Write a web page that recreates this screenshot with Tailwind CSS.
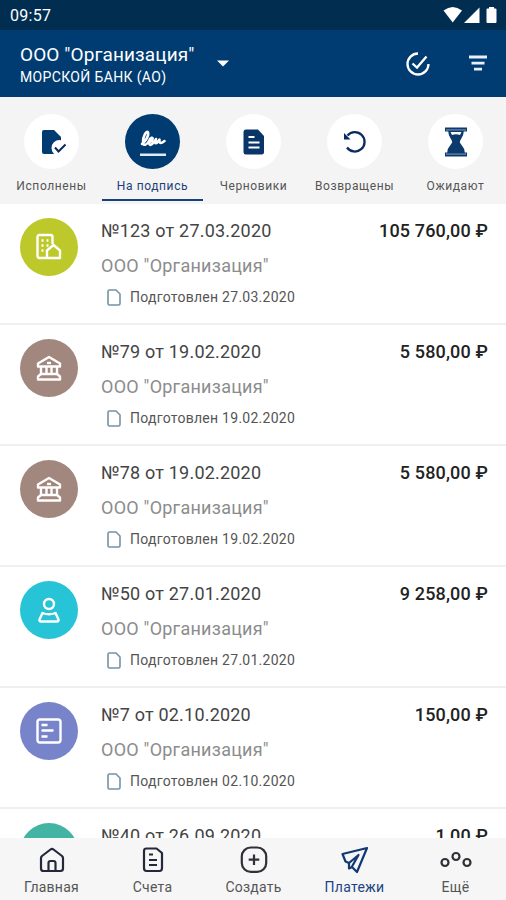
<!DOCTYPE html>
<html lang="ru">
<head>
  <meta charset="UTF-8" />
  <meta name="viewport" content="width=device-width, initial-scale=1" />
  <title>Платежи</title>
  <script src="https://cdn.jsdelivr.net/npm/@tailwindcss/browser@4"></script>
</head>
<body class="bg-white font-[Roboto,sans-serif] whitespace-nowrap">
  <div class="flex flex-col w-full h-[900px] overflow-hidden">
    <!-- Status bar -->
    <div class="h-[30px] shrink-0 bg-[#002d50] text-white flex items-center justify-between pl-2.5 pr-2">
      <span class="text-base leading-none tracking-[0.3px] pt-0.5">09:57</span>
      <svg class="w-[56px] h-[18px]" viewBox="0 0 56 18" fill="#fff">
        <path d="M1.500 4.500Q10.700 -2.500 20 4.500L10.700 16.500Z" />
        <path d="M22 17H37.500V1.500Z" />
        <path d="M47 2.500V1H52V2.500H53.500Q54.500 2.500 54.500 3.500V16Q54.500 17 53.500 17H45.500Q44.500 17 44.500 16V3.500Q44.500 2.500 45.500 2.500Z" />
      </svg>
    </div>

    <!-- Header -->
    <header class="h-[67px] shrink-0 bg-[#003c71] text-white flex items-center pl-5 pr-[19px]">
      <div class="w-[177px] pt-0.5">
        <div class="text-[19px] leading-6 tracking-[0.1px]">ООО "Организация"</div>
        <div class="text-sm leading-5 tracking-[0.35px]">МОРСКОЙ БАНК (АО)</div>
      </div>
      <svg class="w-3 h-[7px] ml-5" viewBox="0 0 12 7" fill="#fff"><path d="M0 .5H12L6 6.500Z" /></svg>
      <svg class="w-6 h-6 ml-auto" viewBox="0 0 24 24" fill="none" stroke="#fff" stroke-width="2.300">
        <path d="M12 1.500A10.500 10.500 0 1 0 22.500 12" />
        <path d="M6.500 11.500L11 15.500L20.500 4.500" />
      </svg>
      <svg class="w-[18px] h-[17px] ml-[39px]" viewBox="0 0 18 17" fill="#e8f0ff">
        <path d="M0 .500H18V3.500H0ZM2.500 6.700H15.500V9.500H2.500ZM5 12.700H13V15.500H5Z" />
      </svg>
    </header>

    <!-- Status tabs -->
    <nav class="h-[107px] shrink-0 bg-[#f4f4f4] grid grid-cols-5 pt-[17px] pl-px text-[#555] text-xs leading-4 tracking-[0.6px]">
      <div class="flex flex-col items-center">
        <div class="size-[55px] rounded-full bg-white flex items-center justify-center">
          <svg class="w-7 h-7" viewBox="0 0 28 28">
            <path d="M6 2H16L23 9V26H6Q4 26 4 24V4Q4 2 6 2Z" fill="#003c71" />
            <circle cx="21.500" cy="20" r="8" fill="#fff" />
            <path d="M17 19.500L20.500 23.500L27.500 16.500" fill="none" stroke="#0b2a63" stroke-width="2" />
          </svg>
        </div>
        <span class="mt-[9px]">Исполнены</span>
      </div>
      <div class="flex flex-col items-center text-[#1d3f78] border-b-2 border-[#17407c] mb-[3px]">
        <div class="size-[55px] rounded-full bg-[#003c71] flex items-center justify-center">
          <svg class="w-7 h-7" viewBox="0 0 28 28" fill="none" stroke="#fff" stroke-width="2.600" stroke-linecap="round" stroke-linejoin="round">
            <path d="M3 16C7 13 10 7 9 4.500C7.500 2 4 8 4 14C4 18.500 8 17 10 13C11 9.500 14.500 8.500 13.500 11.500C12.500 14.500 10 13.500 10 15.500C11 19 15 15 17 11C15.500 16 17 17 20.500 11.500C20 15.500 21.500 16 25.500 13" />
            <path d="M1 27H27" stroke-width="3" stroke-linecap="butt" stroke="#e0e9f5" />
          </svg>
        </div>
        <span class="mt-[9px]">На подпись</span>
      </div>
      <div class="flex flex-col items-center">
        <div class="size-[55px] rounded-full bg-white flex items-center justify-center">
          <svg class="w-[22px] h-[26px]" viewBox="0 0 22 26">
            <path d="M3 .500H15L21 7V23Q21 25.500 18.500 25.500H3Q.500 25.500 .500 23V3Q.500 .500 3 .500Z" fill="#0a3568" />
            <path d="M5.500 8H11.500M5.500 13.500H16.500M5.500 18.500H16.500" stroke="#fff" stroke-width="2.200" />
          </svg>
        </div>
        <span class="mt-[9px]">Черновики</span>
      </div>
      <div class="flex flex-col items-center">
        <div class="size-[55px] rounded-full bg-white flex items-center justify-center">
          <svg class="w-6 h-6" viewBox="0 0 24 24">
            <path d="M4.500 5.500A9.700 9.700 0 1 1 4 17.500" fill="none" stroke="#0b2a63" stroke-width="2.300" />
            <path d="M1 3V9.500H7.500Z" fill="#0b2a63" />
          </svg>
        </div>
        <span class="mt-[9px]">Возвращены</span>
      </div>
      <div class="flex flex-col items-center">
        <div class="size-[55px] rounded-full bg-white flex items-center justify-center">
          <svg class="w-[22px] h-[30px]" viewBox="0 0 22 30">
            <path d="M0 .500H22V4.500H0ZM0 25.500H22V29.500H0Z" fill="#0b3a6c" />
            <path d="M1 3H21M1 27H21" stroke="#b8c9da" stroke-width=".8" />
            <path d="M4 4.500C4 10 8 12 8 15C8 18 3 19 3 25.500H19C19 19 14 18 14 15C14 12 18 10 18 4.500Z" fill="#0b3a6c" stroke="#0b3a6c" stroke-width="1.500" />
            <path d="M5.500 5H16.500L15 8Q11 6.500 7 8Z" fill="#fff" />
          </svg>
        </div>
        <span class="mt-[9px]">Ожидают</span>
      </div>
    </nav>

    <!-- Payments -->
    <main id="payments" class="h-[634px] shrink-0 overflow-hidden"></main>

    <!-- Bottom navigation -->
    <footer class="h-[62px] shrink-0 bg-[#f6f6f6] grid grid-cols-5 pt-[8px] pl-px text-sm leading-[18px] tracking-[0.25px] text-[#555]">
      <div class="flex flex-col items-center">
        <svg class="w-7 h-7" viewBox="0 0 28 28" fill="none" stroke="#25283a" stroke-width="2.200" stroke-linejoin="round">
          <path d="M3 12Q3 11 4 10L12.500 3.500Q14 2.300 15.500 3.500L24 10Q25 11 25 12V22.500Q25 25 22.500 25H5.500Q3 25 3 22.500Z" />
          <path d="M10.500 25V17Q10.500 15 12.500 15H15.500Q17.500 15 17.500 17V25" />
        </svg>
        <span class="mt-[4px]">Главная</span>
      </div>
      <div class="flex flex-col items-center">
        <svg class="w-7 h-7" viewBox="0 0 28 28" fill="none" stroke="#25283a" stroke-width="2.200" stroke-linejoin="round">
          <path d="M7.500 2.500H17.500L23 7V22Q23 25 20.500 25H7.500Q5 25 5 22V5Q5 2.500 7.500 2.500Z" />
          <path d="M10 8.500H14M10 14H18M10 19H18" />
        </svg>
        <span class="mt-[4px]">Счета</span>
      </div>
      <div class="flex flex-col items-center">
        <svg class="w-7 h-7" viewBox="0 0 28 28" fill="none" stroke="#303038" stroke-width="2.200">
          <rect x="1.800" y="1.500" width="24.400" height="24.400" rx="9" />
          <path d="M14 8.500V19M8.700 13.700H19.300" />
        </svg>
        <span class="mt-[4px]">Создать</span>
      </div>
      <div class="flex flex-col items-center text-[#1f4382]">
        <svg class="w-7 h-7" viewBox="0 0 28 28" fill="none" stroke="#123872" stroke-width="2.200" stroke-linejoin="round">
          <path d="M26 2L1.500 8L4.500 15.500L8 17V22.500L11 21L16 26Z" />
          <path d="M8 17L17.500 9L11 20.500" />
        </svg>
        <span class="mt-[4px]">Платежи</span>
      </div>
      <div class="flex flex-col items-center">
        <svg class="w-8 h-7" viewBox="0 0 32 28" fill="none" stroke="#303038" stroke-width="2.200">
          <circle cx="5" cy="16.500" r="3.500" />
          <circle cx="16" cy="10.500" r="3.500" />
          <circle cx="27" cy="16.500" r="3.500" />
        </svg>
        <span class="mt-[4px]">Ещё</span>
      </div>
    </footer>
  </div>

  <script>
    const icons = {
      building: `<path d="M11 25H4.500Q2.500 25 2.500 23V4Q2.500 2 4.500 2H15.500Q17.500 2 17.500 4V11" /><path d="M12 25V17.500L18.500 12L25 17.500V25Z" /><path d="M6.500 7.500H8.500M11.500 7.500H13.500M6.500 12.500H8.500M11.500 12.500H13.500M6.500 17.500H8.500" />`,
      bank: `<path d="M14 3L25 9.500V12.500H3V9.500Z" /><path d="M12 9H16" /><path d="M6 13V20M11.500 13V20M16.500 13V20M22 13V20" /><path d="M6 20H22L25 22.500V25.500H3V22.500Z" />`,
      person: `<circle cx="14" cy="8" r="5" /><path d="M7.500 17Q14 19.500 20.500 17L23.500 23.500Q23.500 25.500 22 25.500H6Q4.500 25.500 4.500 23.500Z" />`,
      form: `<rect x="2.500" y="2.500" width="23" height="23" rx="2.500" /><path d="M6.500 8H12.500M6.500 13.500H18.500M6.500 19.500H12.500" />`,
    };

    const payments = [
      { num: "№123 от 27.03.2020", date: "27.03.2020", sum: "105 760,00 ₽", color: "bg-[#bdc82b]", icon: "building" },
      { num: "№79 от 19.02.2020", date: "19.02.2020", sum: "5 580,00 ₽", color: "bg-[#a1877d]", icon: "bank" },
      { num: "№78 от 19.02.2020", date: "19.02.2020", sum: "5 580,00 ₽", color: "bg-[#a1877d]", icon: "bank" },
      { num: "№50 от 27.01.2020", date: "27.01.2020", sum: "9 258,00 ₽", color: "bg-[#27c3d7]", icon: "person" },
      { num: "№7 от 02.10.2020", date: "02.10.2020", sum: "150,00 ₽", color: "bg-[#7784c9]", icon: "form" },
      { num: "№40 от 26.09.2020", date: "26.09.2020", sum: "1,00 ₽", color: "bg-[#43b3a4]", icon: "form" },
    ];

    document.getElementById("payments").innerHTML = payments.map(p => `
      <div class="h-[121px] flex pl-5 pr-[18px] pt-3.5 border-b-2 border-[#f0f0f0]">
        <div class="size-[58px] shrink-0 rounded-full flex items-center justify-center ${p.color}">
          <svg class="w-7 h-7" viewBox="0 0 28 28" fill="none" stroke="#fff" stroke-width="2.400" stroke-linejoin="round">${icons[p.icon]}</svg>
        </div>
        <div class="ml-[23px] flex-1">
          <div class="flex justify-between text-lg leading-[26px]">
            <span class="text-[#444] tracking-[0.2px]">${p.num}</span>
            <span class="text-[#222] font-medium tracking-[0.15px]">${p.sum}</span>
          </div>
          <div class="mt-[9px] text-lg leading-[26px] tracking-[0.25px] text-[#8c8c8c]">ООО "Организация"</div>
          <div class="mt-2 flex items-center text-sm leading-5 tracking-[0.26px] text-[#555]">
            <svg class="w-[14px] h-[17px] ml-1.5 mr-[9px]" viewBox="0 0 14 17" fill="none" stroke="#7493a8" stroke-width="1.600"><path d="M2.500 1H9L13 5V14.500Q13 16 11.500 16H2.500Q1 16 1 14.500V2.500Q1 1 2.500 1Z" /></svg>
            Подготовлен ${p.date}
          </div>
        </div>
      </div>`).join("");
  </script>
</body>
</html>
